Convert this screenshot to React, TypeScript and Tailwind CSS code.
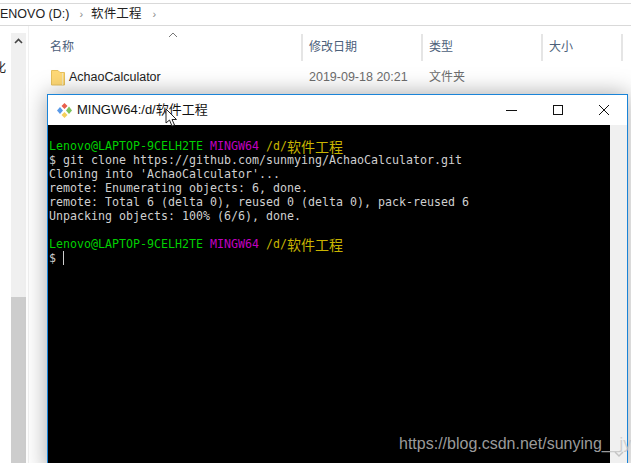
import React from "react";

const sans = "font-['Liberation_Sans','Noto_Sans_CJK_SC',sans-serif]";

function Prompt() {
  return (
    <div className="h-[14px] flex whitespace-pre">
      <span className="text-[#00d000]">Lenovo@LAPTOP-9CELH2TE </span>
      <span className="text-[#c000c0]">MINGW64 </span>
      <span className="text-[#c8b400]">/d/</span>
      <span className="text-[#c8b400] font-['Noto_Sans_CJK_SC',sans-serif] text-[14px] leading-[14px]">软件工程</span>
    </div>
  );
}

function HeaderCell({ label, width }: { label: string; width: string }) {
  return (
    <div className={`${width} h-[27px] border-r-2 border-[#e5e5e5] pl-[6px] text-[12px] leading-[27px] text-[#4c607a] shrink-0`}>
      {label}
    </div>
  );
}

function GitLogo() {
  return (
    <svg width="17" height="17" viewBox="0 0 17 17" className="shrink-0">
      <path d="M8.5 1 11.5 4 8.5 7 5.5 4Z" fill="#e8604c" />
      <path d="M13 4.5 16 8.5 13 12 10 8.5Z" fill="#7ec25c" />
      <path d="M8.5 10 11.5 13 8.5 16 5.5 13Z" fill="#f5d05a" />
      <path d="M4 5 7 8.5 4 12 1 8.5Z" fill="#5a9ae8" />
    </svg>
  );
}

export default function App() {
  return (
    <div className={`relative w-[631px] h-[463px] overflow-hidden bg-white ${sans}`}>
      {/* explorer behind */}
      <div className="h-[23px] mt-[3px] border-y border-[#d9d9d9] flex items-center text-[12.5px] text-[#222]">
        <span className="ml-[-7px] whitespace-nowrap">LENOVO (D:)</span>
        <span className="ml-[10px] text-[#888] text-[11px]">›</span>
        <span className="ml-[8px] tracking-[0.1px]">软件工程</span>
        <span className="ml-[11px] text-[#888] text-[11px]">›</span>
      </div>
      <div className="flex h-[437px]">
        <div className="w-[11px] shrink-0 text-[12px] text-[#222] overflow-hidden">
          <div className="mt-[33px] ml-[-6px]">化</div>
        </div>
        <div className="w-[15px] shrink-0 mt-[7px] bg-[#f0f0f0] flex flex-col">
          <svg width="15" height="15" viewBox="0 0 15 15" className="shrink-0 mt-[1px]">
            <path d="M4 9 7.5 5.5 11 9" fill="none" stroke="#444" strokeWidth="1.6" />
          </svg>
          <div className="mt-[248px] flex-1 bg-[#cdcdcd]" />
        </div>
        <div className="flex-1 min-w-0 ml-[2px] border-l border-[#f0f0f0] pl-[15px] relative">
          <div className="flex mt-[8px]">
            <HeaderCell label="名称" width="w-[259px]" />
            <HeaderCell label="修改日期" width="w-[120px]" />
            <HeaderCell label="类型" width="w-[120px]" />
            <HeaderCell label="大小" width="w-[80px]" />
          </div>
          <svg width="10" height="6" viewBox="0 0 10 6" className="absolute left-[139px] top-[6px]">
            <path d="M1 5 5 1 9 5" fill="none" stroke="#777" strokeWidth="1" />
          </svg>
          <div className="flex items-center h-[22px] mt-[5px] text-[12.5px]">
            <div className="w-[259px] flex items-center shrink-0 pl-[7px] text-[#222]">
              <svg width="14" height="17" viewBox="0 0 14 17" className="shrink-0">
                <path d="M.5 1.5H7L9 3.5H13.5V16H.5Z" fill="#ffd976" stroke="#e6c05e" />
                <path d="M11.5 4V16" stroke="#f3e6b5" strokeWidth="1" />
              </svg>
              <span className="ml-[4px]">AchaoCalculator</span>
            </div>
            <div className="w-[120px] shrink-0 pl-[6px] text-[#6d6d6d] text-[12.5px]">2019-09-18 20:21</div>
            <div className="pl-[6px] text-[#6d6d6d] text-[12px]">文件夹</div>
          </div>
        </div>
      </div>

      {/* terminal window, sits over the explorer */}
      <div className="absolute left-[47px] top-[94px] w-[581px] h-[380px] border border-[#1a84d8] bg-white shadow-[0_0_22px_rgba(0,0,0,0.35)] flex flex-col">
        <div className="h-[30px] shrink-0 flex items-center pl-[8px]">
          <GitLogo />
          <span className="ml-[4px] text-[13px] text-[#111] whitespace-nowrap">MINGW64:/d/软件工程</span>
          <div className="ml-auto flex items-center text-black">
            <svg width="46" height="30" viewBox="0 0 46 30"><path d="M17 15.5H28" stroke="#111" strokeWidth="1" /></svg>
            <svg width="46" height="30" viewBox="0 0 46 30"><rect x="18.5" y="10.5" width="9" height="9" fill="none" stroke="#111" /></svg>
            <svg width="46" height="30" viewBox="0 0 46 30"><path d="M18 10 28 20M28 10 18 20" stroke="#111" strokeWidth="1" /></svg>
          </div>
        </div>
        <div className="flex flex-1 min-h-0">
          <div className="flex-1 bg-black pl-[1px] pt-[14px] font-['DejaVu_Sans_Mono',monospace] text-[11.64px] leading-[14px] text-[#cfcfcf]">
            <Prompt />
            <div className="h-[14px] whitespace-pre">$ git clone https://github.com/sunmying/AchaoCalculator.git</div>
            <div className="h-[14px] whitespace-pre">Cloning into 'AchaoCalculator'...</div>
            <div className="h-[14px] whitespace-pre">remote: Enumerating objects: 6, done.</div>
            <div className="h-[14px] whitespace-pre">remote: Total 6 (delta 0), reused 0 (delta 0), pack-reused 6</div>
            <div className="h-[14px] whitespace-pre">Unpacking objects: 100% (6/6), done.</div>
            <div className="h-[14px]" />
            <Prompt />
            <div className="h-[14px] whitespace-pre flex">
              <span>$ </span>
              <span className="w-px h-[14px] bg-[#cfcfcf]" />
            </div>
          </div>
          <div className="w-[17px] shrink-0 bg-[#f0f0f0]" />
        </div>
      </div>

      <svg width="12" height="8" viewBox="0 0 12 8" className="absolute left-[613px] top-[450px]">
        <path d="M2 2 6 6 10 2" fill="none" stroke="#c4c4c4" strokeWidth="1.5" />
      </svg>

      {/* mouse pointer */}
      <svg width="14" height="20" viewBox="0 0 14 20" className="absolute left-[165px] top-[108px]">
        <path d="M1 1V15L4.5 12 7 18 9.5 17 7 11.5H11.5Z" fill="#fff" stroke="#222" strokeWidth="1" />
      </svg>

      {/* watermark */}
      <div className="absolute left-[399px] top-[434px] text-[16px] leading-[20px] text-[#c4c4c4]/80 whitespace-nowrap font-['Liberation_Sans',sans-serif]">
        https://blog.csdn.net/sunying__jy
      </div>
    </div>
  );
}
